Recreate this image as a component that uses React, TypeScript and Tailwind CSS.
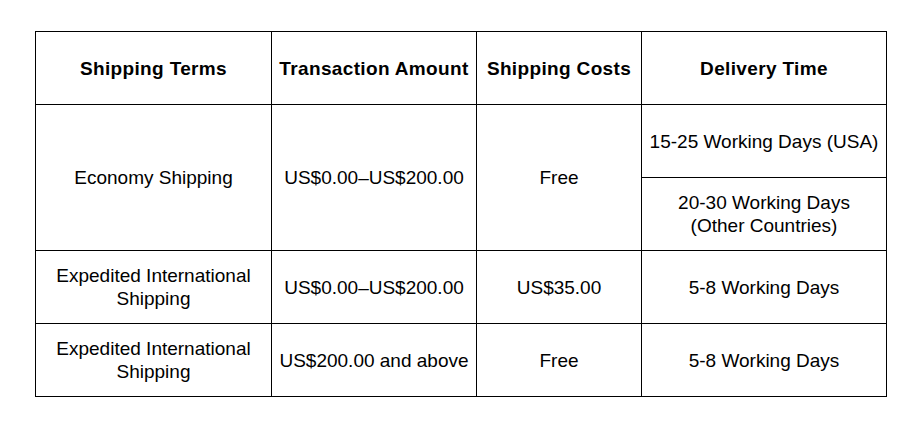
import React from "react";

const cell = "bg-white flex items-center justify-center text-center px-1 whitespace-nowrap";

export default function App() {
  return (
    <div className="w-[923px] h-[428px] bg-white pt-[31px] pl-[35px]" style={{ fontFamily: '"Liberation Sans", Arial, sans-serif' }}>
      <div className="inline-grid grid-cols-[235px_204px_164px_244px] grid-rows-[72px_72px_72px_72px_72px] gap-px p-px bg-black text-black text-[19px] leading-[23px]">
        <div className={`${cell} font-bold tracking-[0.35px]`}>Shipping Terms</div>
        <div className={`${cell} font-bold tracking-[0.35px]`}>Transaction Amount</div>
        <div className={`${cell} font-bold tracking-[0.35px]`}>Shipping Costs</div>
        <div className={`${cell} font-bold tracking-[0.35px]`}>Delivery Time</div>

        <div className={`${cell} row-span-2`}>Economy Shipping</div>
        <div className={`${cell} row-span-2`}>US$0.00–US$200.00</div>
        <div className={`${cell} row-span-2`}>Free</div>
        <div className={cell}>15-25 Working Days (USA)</div>
        <div className={cell}>20-30 Working Days<br />(Other Countries)</div>

        <div className={cell}>Expedited International<br />Shipping</div>
        <div className={cell}>US$0.00–US$200.00</div>
        <div className={cell}>US$35.00</div>
        <div className={cell}>5-8 Working Days</div>

        <div className={cell}>Expedited International<br />Shipping</div>
        <div className={cell}>US$200.00 and above</div>
        <div className={cell}>Free</div>
        <div className={cell}>5-8 Working Days</div>
      </div>
    </div>
  );
}
